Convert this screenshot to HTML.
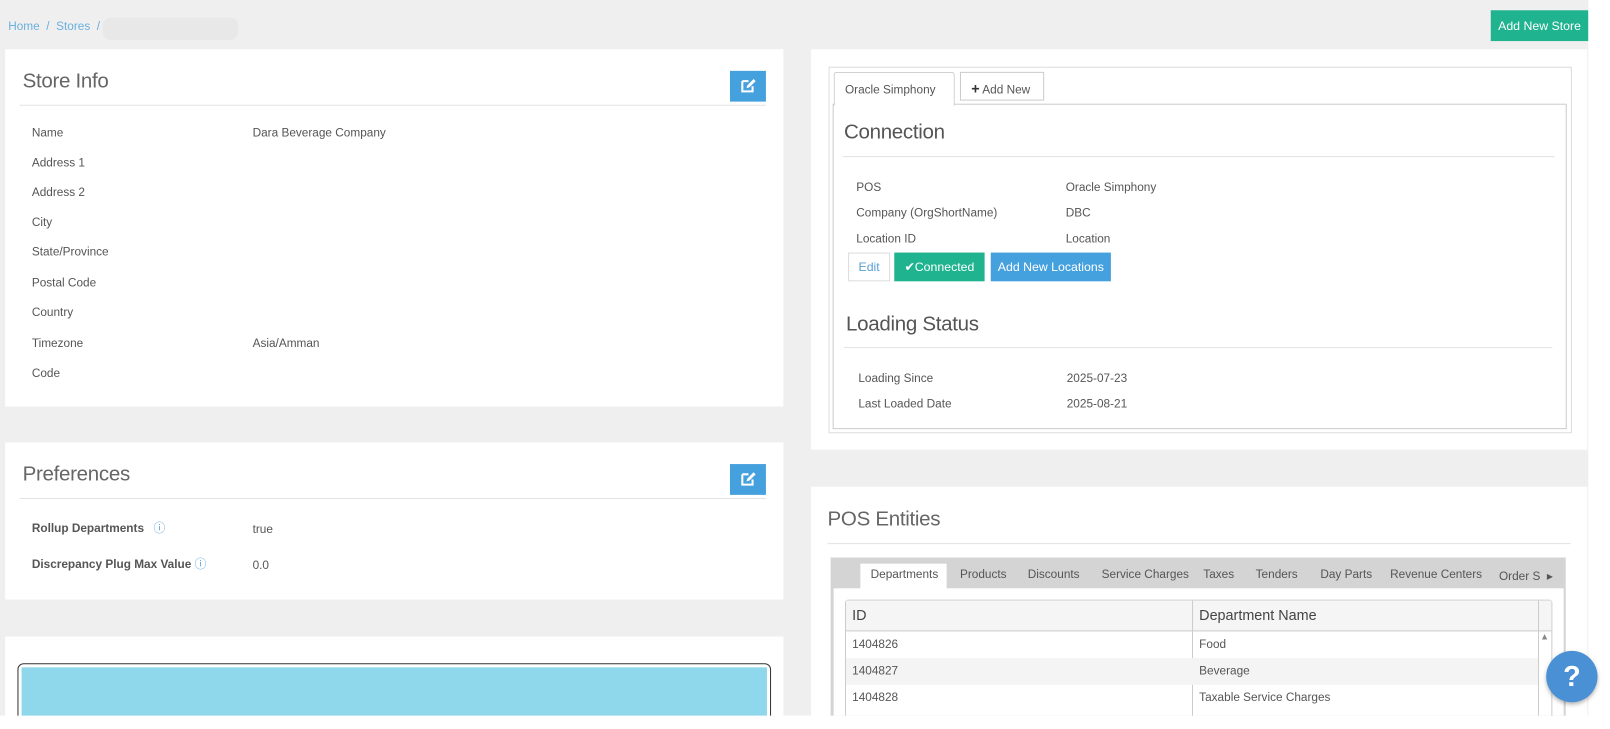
<!DOCTYPE html>
<html><head><style>
*{box-sizing:border-box;margin:0;padding:0}
body{width:1610px;height:728px;background:#fff;font-family:"Liberation Sans",sans-serif;color:#555;position:relative;overflow:hidden}
.wrap{position:absolute;left:0;top:0;width:1568px;height:710px;transform:scale(1.0267);transform-origin:0 0}
.bg{position:absolute;left:0;top:0;width:1547px;height:697px;background:#efefef;overflow:hidden}
.a{position:absolute}
.card{position:absolute;background:#fff}
.h{font-size:20px;font-weight:300;color:#666;letter-spacing:-0.3px}
.hr{position:absolute;height:1px;background:#e3e3e3}
.t{position:absolute;font-size:11.5px;color:#555;white-space:nowrap}
.eb{position:absolute;width:35px;height:30px;background:#45a0de}
.btn{position:absolute;font-size:12px;color:#fff;text-align:center;white-space:nowrap}
</style></head><body>
<div class="wrap">
<div class="bg">
<div class="t" style="left:8px;top:20px;color:#6ab0de">Home &nbsp;/ &nbsp;Stores &nbsp;/</div>
<div class="a" style="left:100px;top:17px;width:132px;height:22px;background:#e8e8e8;border-radius:8px"></div>
<div class="btn" style="left:1452px;top:10px;width:95px;height:30px;line-height:30px;background:#1fb38f">Add New Store</div>

<div class="card" style="left:5px;top:48px;width:758px;height:348px">
 <div class="a h" style="left:17px;top:20px">Store Info</div>
 <div class="eb" style="left:706px;top:21px"><svg width="35" height="30" viewBox="0 0 35 30"><path d="M12 10h6M12 10v10h10v-5" stroke="#fff" stroke-width="2" fill="none"/><path d="M16 17l1-3 6-6 2 2-6 6z" fill="#fff"/></svg></div>
 <div class="hr" style="left:14px;top:54px;width:727px"></div>
 <div class="t" style="left:26px;top:76px">Name</div><div class="t" style="left:241px;top:76px">Dara Beverage Company</div>
 <div class="t" style="left:26px;top:105px">Address 1</div>
 <div class="t" style="left:26px;top:134px">Address 2</div>
 <div class="t" style="left:26px;top:163px">City</div>
 <div class="t" style="left:26px;top:192px">State/Province</div>
 <div class="t" style="left:26px;top:222px">Postal Code</div>
 <div class="t" style="left:26px;top:251px">Country</div>
 <div class="t" style="left:26px;top:281px">Timezone</div><div class="t" style="left:241px;top:281px">Asia/Amman</div>
 <div class="t" style="left:26px;top:310px">Code</div>
</div>

<div class="card" style="left:5px;top:431px;width:758px;height:153px">
 <div class="a h" style="left:17px;top:20px">Preferences</div>
 <div class="eb" style="left:706px;top:21px"><svg width="35" height="30" viewBox="0 0 35 30"><path d="M12 10h6M12 10v10h10v-5" stroke="#fff" stroke-width="2" fill="none"/><path d="M16 17l1-3 6-6 2 2-6 6z" fill="#fff"/></svg></div>
 <div class="hr" style="left:14px;top:54px;width:727px"></div>
 <div class="t" style="left:26px;top:75px;font-weight:bold">Rollup Departments <span style="color:#5a9fd6;font-weight:normal;margin-left:6px">&#9432;</span></div>
 <div class="t" style="left:241px;top:79px">true</div>
 <div class="t" style="left:26px;top:110px;font-weight:bold">Discrepancy Plug Max Value <span style="color:#5a9fd6;font-weight:normal">&#9432;</span></div>
 <div class="t" style="left:241px;top:114px">0.0</div>
</div>

<div class="card" style="left:5px;top:620px;width:758px;height:100px">
 <div class="a" style="left:12px;top:26px;width:734px;height:80px;border:1px solid #333;border-radius:6px;padding:3px"><div style="background:#8fd8ec;height:100%"></div></div>
</div>

<div class="card" style="left:790px;top:48px;width:756px;height:390px">
 <div class="a" style="left:17px;top:17px;width:724px;height:357px;border:1px solid #ddd"></div>
 <div class="a" style="left:21px;top:53px;width:715px;height:317px;border:1px solid #ccc"></div>
 <div class="a" style="left:22px;top:22px;width:118px;height:33px;border:1px solid #ccc;border-bottom:none;background:#fff;border-radius:3px 3px 0 0;font-size:11.5px;padding:11px 0 0 10px">Oracle Simphony</div>
 <div class="a" style="left:145px;top:22px;width:82px;height:28px;border:1px solid #ccc;font-size:11.5px;padding:7px 0 0 10px"><b style="font-size:14px;color:#333">+</b> Add New</div>
 <div class="a h" style="left:32px;top:70px;color:#555">Connection</div>
 <div class="hr" style="left:31px;top:104px;width:693px"></div>
 <div class="t" style="left:44px;top:129px">POS</div><div class="t" style="left:248px;top:129px">Oracle Simphony</div>
 <div class="t" style="left:44px;top:154px">Company (OrgShortName)</div><div class="t" style="left:248px;top:154px">DBC</div>
 <div class="t" style="left:44px;top:179px">Location ID</div><div class="t" style="left:248px;top:179px">Location</div>
 <div class="btn" style="left:36px;top:198px;width:41px;height:28px;line-height:26px;border:1px solid #ddd;color:#5a9fd6">Edit</div>
 <div class="btn" style="left:81px;top:198px;width:88px;height:28px;line-height:28px;background:#1fb38f">&#10004;Connected</div>
 <div class="btn" style="left:175px;top:198px;width:117px;height:28px;line-height:28px;background:#45a0de">Add New Locations</div>
 <div class="a h" style="left:34px;top:257px;color:#555">Loading Status</div>
 <div class="hr" style="left:32px;top:290px;width:690px"></div>
 <div class="t" style="left:46px;top:315px">Loading Since</div><div class="t" style="left:249px;top:315px">2025-07-23</div>
 <div class="t" style="left:46px;top:340px">Last Loaded Date</div><div class="t" style="left:249px;top:340px">2025-08-21</div>
</div>

<div class="card" style="left:790px;top:474px;width:756px;height:240px">
 <div class="a h" style="left:16px;top:21px">POS Entities</div>
 <div class="hr" style="left:16px;top:55px;width:724px"></div>
 <div class="a" style="left:19px;top:69px;width:716px;height:180px;background:#d4d4d4"></div>
 <div class="a" style="left:22px;top:99px;width:711px;height:150px;background:#fff"></div>
 <div class="a" style="left:48px;top:75px;width:84px;height:25px;background:#fff"></div>
 <div class="t" style="left:58px;top:80px">Departments</div>
 <div class="t" style="left:145px;top:80px">Products</div>
 <div class="t" style="left:211px;top:80px">Discounts</div>
 <div class="t" style="left:283px;top:80px">Service Charges</div>
 <div class="t" style="left:382px;top:80px">Taxes</div>
 <div class="t" style="left:433px;top:80px">Tenders</div>
 <div class="t" style="left:496px;top:80px">Day Parts</div>
 <div class="t" style="left:564px;top:80px">Revenue Centers</div>
 <div class="t" style="left:670px;top:80px">Order S &nbsp;&#9656;</div>
 <div class="a" style="left:33px;top:110px;width:689px;height:130px;border:1px solid #ccc;border-radius:3px 3px 0 0"></div>
 <div class="a" style="left:34px;top:111px;width:687px;height:30px;background:#f5f5f5;border-bottom:1px solid #ccc"></div>
 <div class="a" style="left:371px;top:111px;width:1px;height:130px;background:#ccc"></div>
 <div class="a" style="left:708px;top:111px;width:1px;height:130px;background:#ccc"></div>
 <div class="t" style="left:40px;top:117px;font-size:14px;color:#444">ID</div>
 <div class="t" style="left:378px;top:117px;font-size:14px;color:#444">Department Name</div>
 <div class="a" style="left:34px;top:167px;width:674px;height:26px;background:#f4f4f4"></div>
 <div class="t" style="left:40px;top:148px">1404826</div><div class="t" style="left:378px;top:148px">Food</div>
 <div class="t" style="left:40px;top:174px">1404827</div><div class="t" style="left:378px;top:174px">Beverage</div>
 <div class="t" style="left:40px;top:200px">1404828</div><div class="t" style="left:378px;top:200px">Taxable Service Charges</div>
 <div class="t" style="left:710px;top:141px;font-size:9px;color:#888">&#9650;</div>
</div>
</div>
<div class="a" style="left:1506px;top:634px;width:50px;height:50px;border-radius:50%;background:#4a90d4;color:#fff;font-size:28px;font-weight:bold;text-align:center;line-height:50px;box-shadow:0 2px 4px rgba(0,0,0,.3)">?</div>
</div>
</body></html>
